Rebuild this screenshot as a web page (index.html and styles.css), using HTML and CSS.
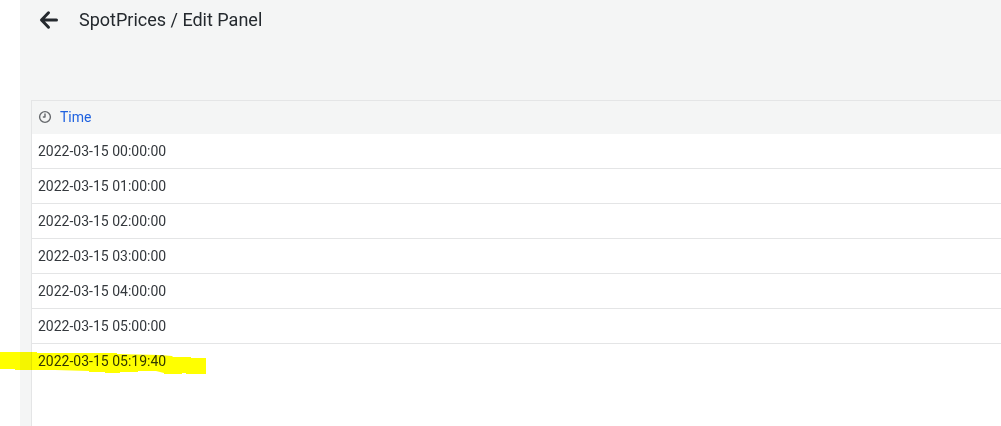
FILE: index.html
```html
<!DOCTYPE html>
<html lang="en">
<head>
    <meta charset="UTF-8">
    <meta name="viewport" content="width=device-width, initial-scale=1.0">
    <title>SpotPrices / Edit Panel</title>
    <link rel="stylesheet" href="styles.css">
</head>
<body>

    <div class="editor">
        <!-- Toolbar -->
        <header class="toolbar">
            <button class="back-btn" type="button" aria-label="Go back">
                <svg width="20" height="20" viewBox="0 0 20 20" fill="none" stroke="currentColor" stroke-width="3" stroke-linecap="round" stroke-linejoin="round">
                    <path d="M17.5 10H3M9.5 2.8L2.5 10l7 7.2"/>
                </svg>
            </button>
            <h1>SpotPrices / Edit Panel</h1>
        </header>

        <!-- Table Panel -->
        <main class="panel">
            <table class="data-table">
                <thead>
                    <tr>
                        <th scope="col">
                            <div class="column-head">
                                <svg width="14" height="14" viewBox="0 0 14 14" fill="none" stroke="currentColor" stroke-width="1.4" stroke-linecap="round" stroke-linejoin="round">
                                    <circle cx="7" cy="7" r="5.4"/>
                                    <path d="M7 4v3H5.4"/>
                                </svg>
                                <button class="sort-btn" type="button">Time</button>
                            </div>
                        </th>
                    </tr>
                </thead>
                <tbody>
                    <tr><td>2022-03-15 00:00:00</td></tr>
                    <tr><td>2022-03-15 01:00:00</td></tr>
                    <tr><td>2022-03-15 02:00:00</td></tr>
                    <tr><td>2022-03-15 03:00:00</td></tr>
                    <tr><td>2022-03-15 04:00:00</td></tr>
                    <tr><td>2022-03-15 05:00:00</td></tr>
                    <tr>
                        <td class="marked">
                            2022-03-15 05:19:40
                            <svg class="marker" width="206" height="24" viewBox="0 0 206 24">
                                <path d="M0 1H37V2H117V3L160 4 172 5 173 6H191V7H206V23H186V22H182V23H164V22L156 20H138V21H120V22H105V21H89V20L55 19H15V18H0Z" fill="#ffff00"/>
                            </svg>
                        </td>
                    </tr>
                </tbody>
            </table>
        </main>
    </div>

</body>
</html>
```
FILE: styles.css
```css
* { margin: 0; padding: 0; box-sizing: border-box; }
body { background: #fff; color: #24292e; font-family: Roboto, sans-serif; font-size: 14px; }
button { background: none; border: none; font: inherit; color: inherit; cursor: pointer; }

.editor {
    min-height: 100vh; margin-left: 20px; padding-left: 11px; background: #f4f5f5;
    display: flex; flex-direction: column;
}

/* Toolbar */
.toolbar { display: flex; align-items: center; gap: 20px; height: 40px; padding-left: 8px; margin-bottom: 60px; }
.toolbar h1 { font-size: 18px; font-weight: 400; line-height: 24px; }
.back-btn { display: flex; }

/* Table Panel */
.panel { flex: 1; background: #fff; border-top: 1px solid #e4e5e6; border-left: 1px solid #e4e5e6; }
.data-table { width: 100%; border-collapse: separate; border-spacing: 0; }
.data-table th { height: 33px; padding: 0 6px 2px; background: #f4f5f5; text-align: left; font-weight: 400; }
.data-table td { height: 35px; padding: 0 6px; border-bottom: 1px solid #e4e5e6; color: #34383d; line-height: 20px; }
.data-table tr:last-child td { border-bottom-color: transparent; }
.column-head { display: flex; align-items: center; gap: 8px; color: #66696d; }
.sort-btn { color: #1f62e0; line-height: 20px; }

/* Highlighter stroke over the last row */
.marked { position: relative; }
.marker { position: absolute; left: -32px; top: 7px; mix-blend-mode: multiply; }
```
